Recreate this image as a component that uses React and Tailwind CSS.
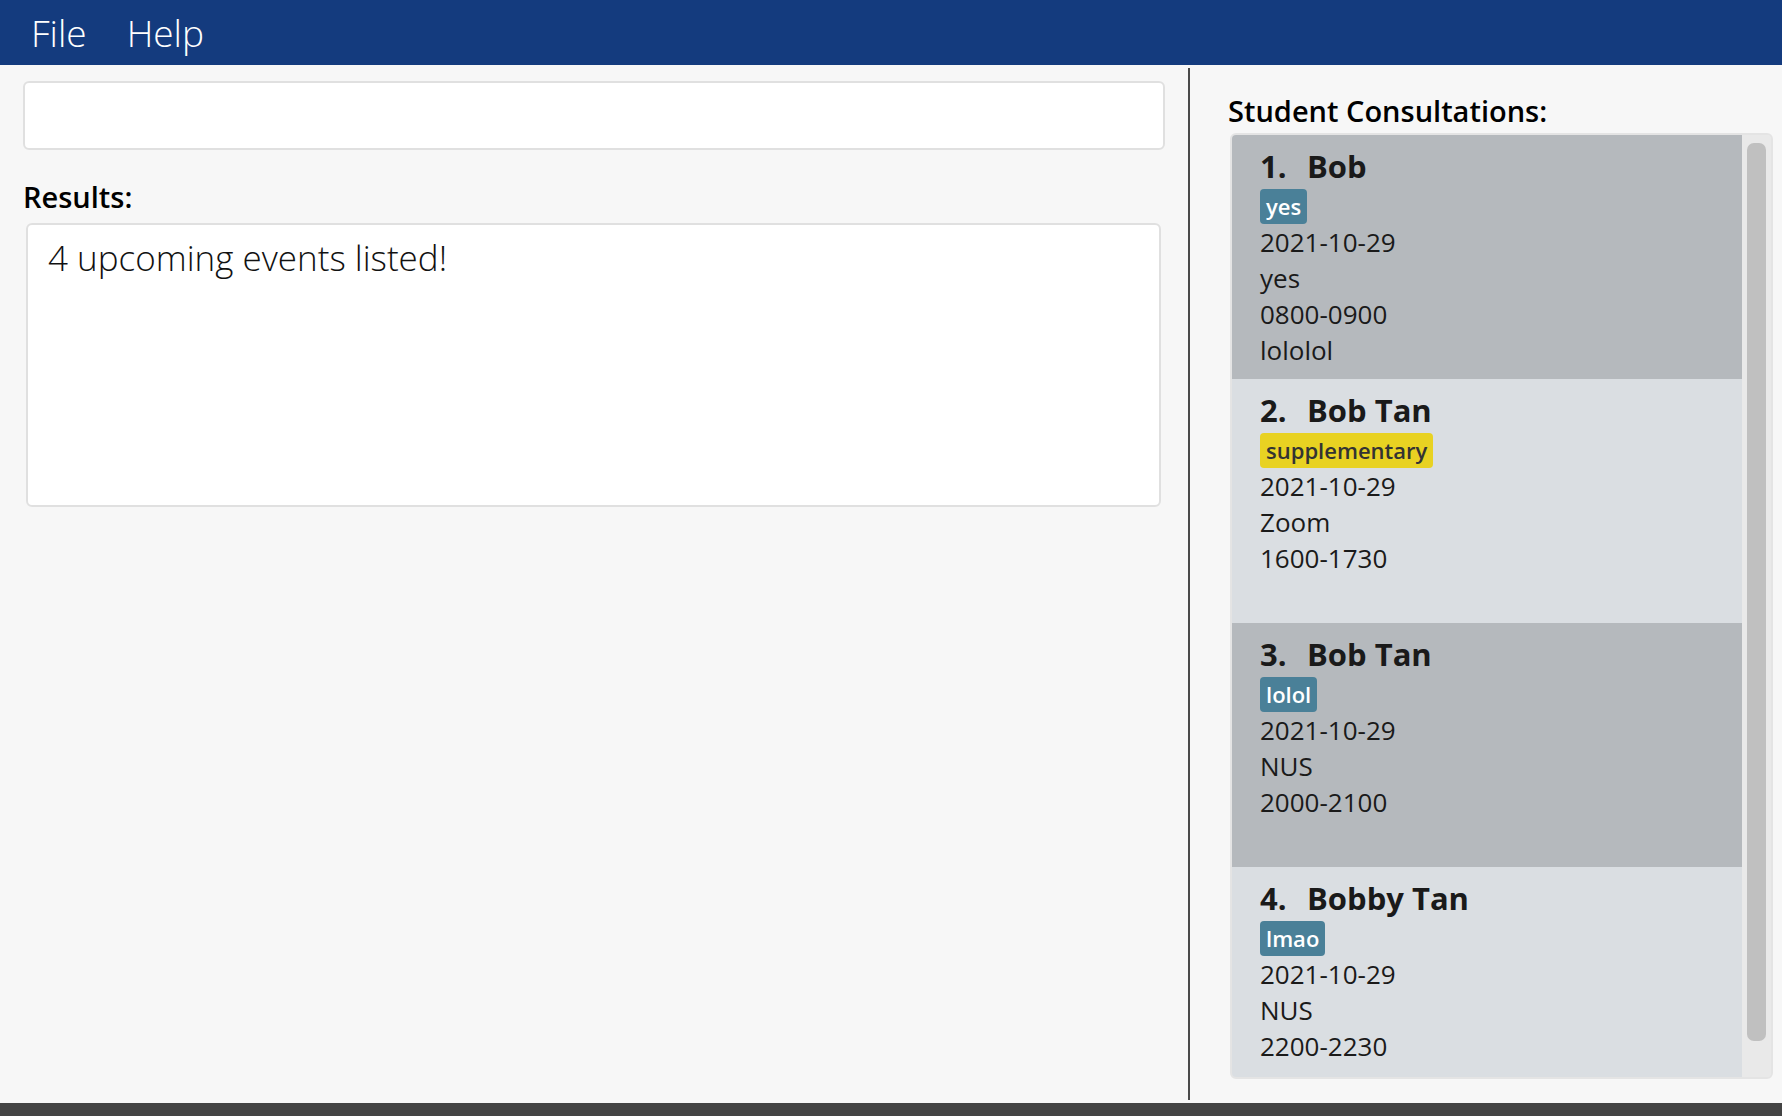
import React from "react";

const consultations = [
  { name: "Bob", tag: "yes", tagKind: "teal", lines: ["2021-10-29", "yes", "0800-0900", "lololol"] },
  { name: "Bob Tan", tag: "supplementary", tagKind: "yellow", lines: ["2021-10-29", "Zoom", "1600-1730"] },
  { name: "Bob Tan", tag: "lolol", tagKind: "teal", lines: ["2021-10-29", "NUS", "2000-2100"] },
  { name: "Bobby Tan", tag: "lmao", tagKind: "teal", lines: ["2021-10-29", "NUS", "2200-2230"] },
];

function Card({ idx, item }) {
  const dark = idx % 2 === 0;
  return (
    <div className={`h-[244px] shrink-0 pl-[28px] pt-[11px] ${dark ? "bg-[#b5b9bd]" : "bg-[#dadee2]"}`}>
      <div className="flex text-[31px] leading-[40px] font-bold text-[#1a1a1a]">
        <span className="w-[47px] shrink-0">{idx + 1}.</span>
        <span>{item.name}</span>
      </div>
      <div className="mt-[3px] flex">
        <span
          className={`h-[35px] px-[6px] rounded-[4px] text-[22px] leading-[35px] font-semibold ${
            item.tagKind === "yellow" ? "bg-[#e8d222] text-[#333]" : "bg-[#4a8098] text-white"
          }`}
        >
          {item.tag}
        </span>
      </div>
      {item.lines.map((l, i) => (
        <div key={i} className="text-[26px] leading-[36px] text-[#1a1a1a]">
          {l}
        </div>
      ))}
    </div>
  );
}

export default function App() {
  return (
    <div className="h-screen flex flex-col bg-[#f7f7f7] font-['Open_Sans',sans-serif] overflow-hidden">
      {/* menu bar */}
      <header className="h-[65px] shrink-0 bg-[#143b7e] flex items-center pl-[31px] gap-[40px] text-white text-[37px] font-light">
        <span>File</span>
        <span>Help</span>
      </header>

      <div className="flex-1 flex min-h-0">
        {/* left: command + results */}
        <div className="w-[1188px] shrink-0 pl-[23px] pt-[16px]">
          <div className="w-[1142px] h-[69px] bg-white border-2 border-[#e0e0e0] rounded-[6px]" />
          <div className="mt-[28px] text-[29px] leading-[38px] font-semibold text-black">Results:</div>
          <div className="ml-[3px] mt-[7px] w-[1135px] h-[284px] bg-white border-2 border-[#e0e0e0] rounded-[6px] pl-[20px] pt-[11px]">
            <div className="text-[35px] leading-[44px] font-light text-[#111]">4 upcoming events listed!</div>
          </div>
        </div>

        {/* divider */}
        <div className="w-[2px] bg-[#4a4a4a] my-[3px] shrink-0" />

        {/* right: consultations */}
        <div className="flex-1 pl-[38px] pr-[9px] flex flex-col pb-[24px]">
          <div className="mt-[27px] text-[29px] leading-[38px] font-semibold text-black">Student Consultations:</div>
          <div className="ml-[2px] mt-[3px] flex-1 flex bg-[#e8e8e8] border-2 border-[#e4e4e4] rounded-[6px] overflow-hidden">
            <div className="flex-1 flex flex-col overflow-hidden">
              {consultations.map((c, i) => (
                <Card key={i} idx={i} item={c} />
              ))}
            </div>
            <div className="w-[29px] shrink-0 bg-[#e9e9e9] pt-[8px] px-[5px]">
              <div className="h-[898px] rounded-[7px] bg-[#c0c0c0]" />
            </div>
          </div>
        </div>
      </div>

      {/* status bar */}
      <div className="h-[13px] shrink-0 bg-[#444444]" />
    </div>
  );
}
